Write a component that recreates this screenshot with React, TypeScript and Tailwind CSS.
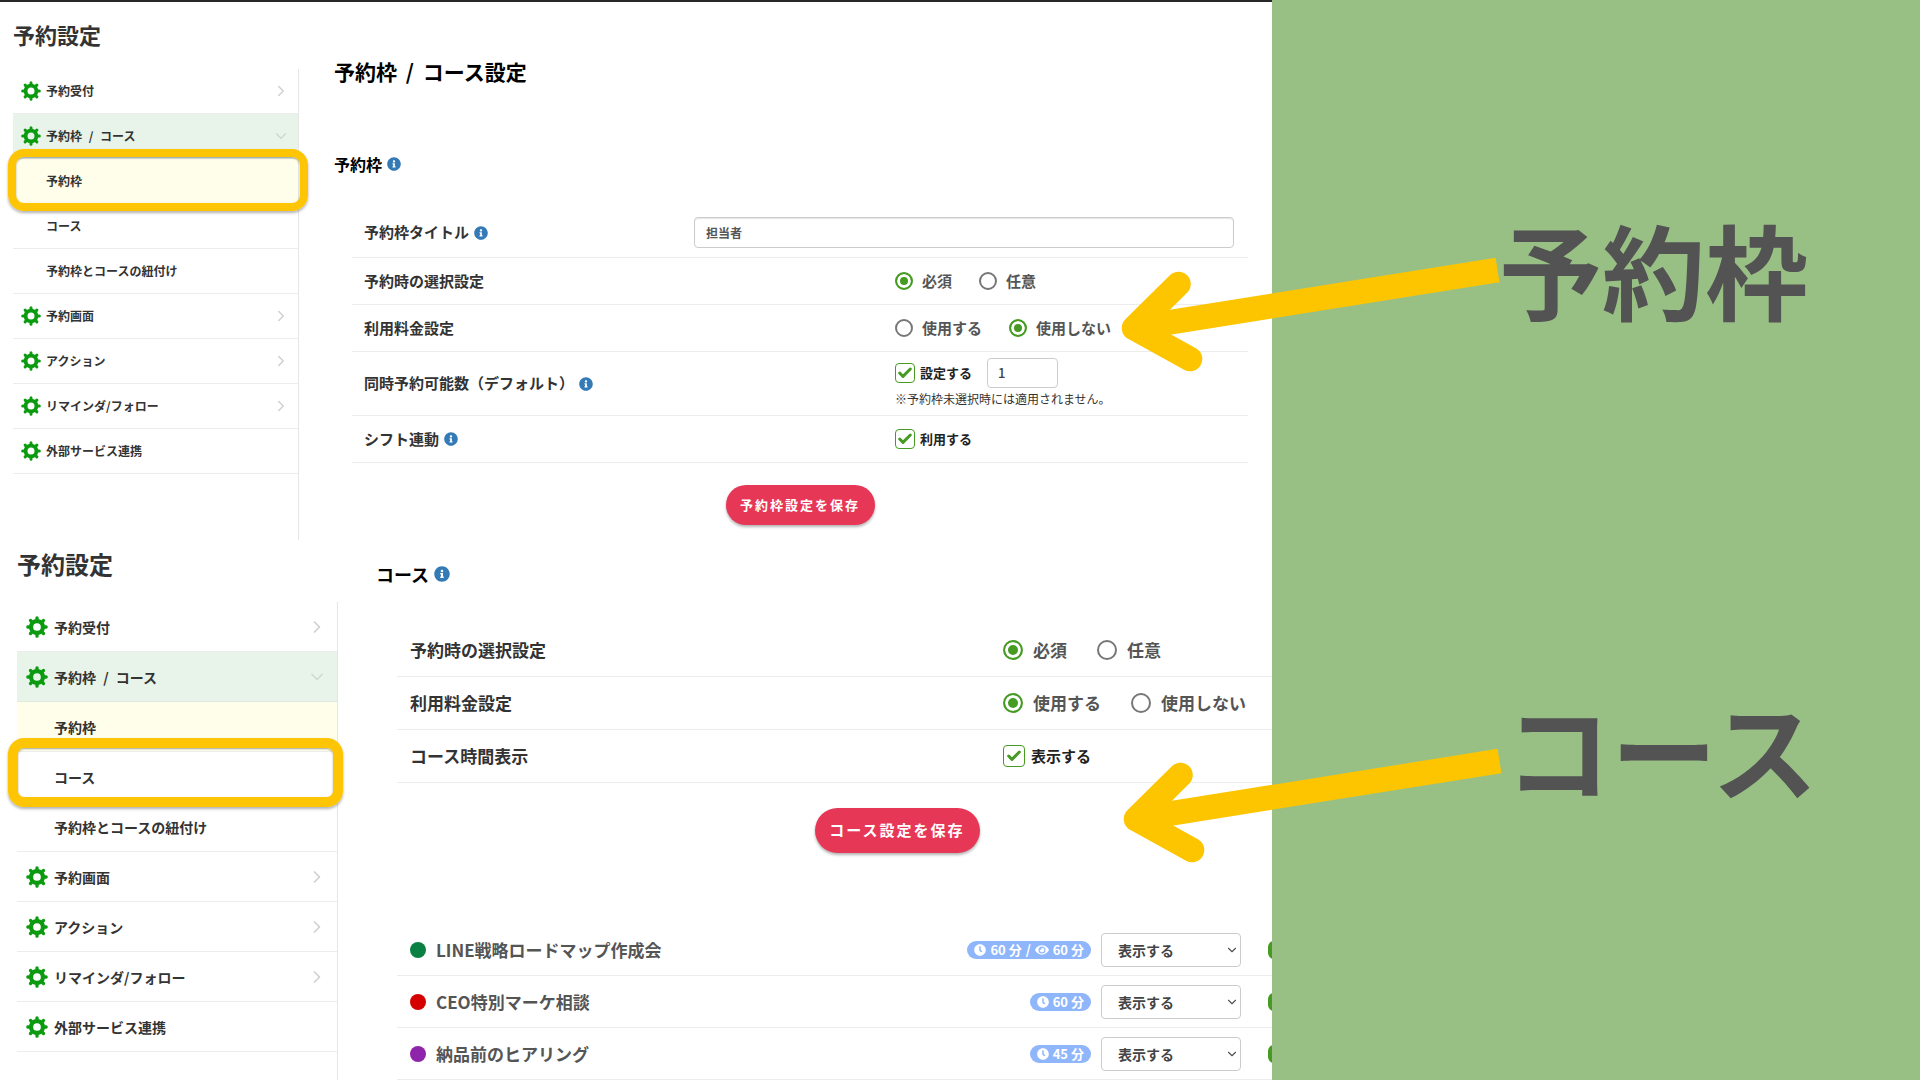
import React from 'react';
import { Check, ChevronDown, ChevronRight } from 'lucide-react';
import { FaClock, FaEye, FaInfoCircle } from 'react-icons/fa';

type Size = 'md' | 'lg';

interface MenuItem {
  id: string;
  label: React.ReactNode;
  kind: 'link' | 'parent' | 'open' | 'child';
}

const Slash: React.FC = () => <span className="mx-1">/</span>;

const MENU: MenuItem[] = [
  { id: 'reception', label: '予約受付', kind: 'parent' },
  { id: 'slot-course', label: <>予約枠 <Slash /> コース</>, kind: 'open' },
  { id: 'slot', label: '予約枠', kind: 'child' },
  { id: 'course', label: 'コース', kind: 'child' },
  { id: 'relation', label: '予約枠とコースの紐付け', kind: 'child' },
  { id: 'screen', label: '予約画面', kind: 'parent' },
  { id: 'action', label: 'アクション', kind: 'parent' },
  { id: 'remind', label: 'リマインダ/フォロー', kind: 'parent' },
  { id: 'external', label: '外部サービス連携', kind: 'link' },
];

const COURSES = [
  { name: 'LINE戦略ロードマップ作成会', dot: 'bg-[#0a8043]', time: '60 分', view: '60 分' },
  { name: 'CEO特別マーケ相談', dot: 'bg-[#d50000]', time: '60 分', view: null },
  { name: '納品前のヒアリング', dot: 'bg-[#8e24aa]', time: '45 分', view: null },
];

const GearIcon: React.FC<{ className: string }> = ({ className }) => (
  <svg viewBox="0 0 24 24" className={className} stroke="#0c9b10" fill="none" aria-hidden="true">
    <circle cx="12" cy="12" r="6.5" strokeWidth="4.6" />
    {[0, 45, 90, 135].map((deg) => (
      <g key={deg} transform={`rotate(${deg} 12 12)`} strokeWidth="3.6" strokeLinecap="round">
        <path d="M12 2V4M12 20v2" />
      </g>
    ))}
  </svg>
);

const Info: React.FC<{ size: Size }> = ({ size }) => (
  <FaInfoCircle className={`shrink-0 text-[#337ab7] ${size === 'lg' ? 'size-4' : 'size-3.5'}`} />
);

/* サイドメニュー */
const SideMenu: React.FC<{ size: Size; marked: string }> = ({ size, marked }) => {
  const lg = size === 'lg';
  return (
    <aside
      className={`flex shrink-0 flex-col text-[#333] ${
        lg ? 'w-[338px] pl-[17px] pt-1.5' : 'w-[299px] pl-[13px] pt-[17px]'
      }`}
    >
      <h2 className={`font-bold ${lg ? 'mb-5 text-2xl leading-9' : 'mb-5 text-[22px] leading-[30px]'}`}>
        予約設定
      </h2>
      <nav className="flex-1 border-r border-[#e6e6e6]">
        <ul>
          {MENU.map((item) => {
            const child = item.kind === 'child';
            return (
              <li
                key={item.id}
                className={`relative border-b ${lg ? 'h-[50px]' : 'h-[45px]'} ${
                  item.kind === 'open'
                    ? 'border-[#e0e8e0] bg-[#e8f4ea]'
                    : item.id === 'slot'
                      ? 'border-[#ececec] bg-[#fffeea]'
                      : 'border-[#ececec]'
                }`}
              >
                {item.id === marked && (
                  <span
                    className={`pointer-events-none absolute z-10 border-[#fdc503] shadow-[0_2px_3px_rgba(0,0,0,0.3),inset_0_1px_2px_rgba(0,0,0,0.35)] ${
                      lg
                        ? '-bottom-1.5 -left-[9px] -right-1.5 -top-3.5 rounded-2xl border-10'
                        : '-bottom-2 -left-[5px] -right-2.5 -top-2.5 rounded-2xl border-8'
                    }`}
                  />
                )}
                <a
                  href="#"
                  className={`flex h-full items-center font-bold ${
                    lg ? 'pl-[9px] pr-3.5 text-sm' : 'pl-2 pr-3 text-xs'
                  }`}
                >
                  {child ? (
                    <span className={lg ? 'w-7' : 'w-[25px]'} />
                  ) : (
                    <GearIcon className={lg ? 'mr-1.5 size-[22px]' : 'mr-[5px] size-5'} />
                  )}
                  <span className="flex-1">{item.label}</span>
                  {item.kind === 'parent' && (
                    <ChevronRight className={`-mr-1 text-[#d0d0d0] ${lg ? 'size-5' : 'size-[18px]'}`} strokeWidth={2} />
                  )}
                  {item.kind === 'open' && (
                    <ChevronDown className={`-mr-1 text-[#d0d8d2] ${lg ? 'size-5' : 'size-[18px]'}`} strokeWidth={2} />
                  )}
                </a>
              </li>
            );
          })}
        </ul>
      </nav>
    </aside>
  );
};

const Row: React.FC<{
  size: Size;
  label: React.ReactNode;
  height: string;
  children: React.ReactNode;
}> = ({ size, label, height, children }) => (
  <div className={`grid grid-cols-[60.6%_1fr] items-center border-b border-[#ececec] ${height}`}>
    <div
      className={`flex items-center gap-[5px] font-bold text-[#333] ${
        size === 'lg' ? 'pl-[13px] text-[17px]' : 'pl-3 text-[15px]'
      }`}
    >
      {label}
    </div>
    {children}
  </div>
);

const RadioGroup: React.FC<{ size: Size; name: string; options: string[]; value: string }> = ({
  size,
  name,
  options,
  value,
}) => {
  const lg = size === 'lg';
  return (
    <div role="radiogroup" className={`flex ${lg ? 'gap-[30px]' : 'gap-[27px]'}`}>
      {options.map((option) => (
        <label
          key={option}
          className={`flex items-center font-bold text-[#555] ${lg ? 'gap-2.5 text-[17px]' : 'gap-[9px] text-[15px]'}`}
        >
          <input
            type="radio"
            name={name}
            defaultChecked={option === value}
            className={`appearance-none rounded-full border-2 border-[#777] checked:border-[#469b22] checked:bg-[#469b22] checked:shadow-[inset_0_0_0_3px_#fff] ${
              lg ? 'size-5' : 'size-[18px]'
            }`}
          />
          {option}
        </label>
      ))}
    </div>
  );
};

const CheckField: React.FC<{ size: Size; label: string }> = ({ size, label }) => {
  const lg = size === 'lg';
  return (
    <label
      className={`flex items-center font-bold text-[#222] ${lg ? 'gap-1.5 text-[15px]' : 'gap-[5px] text-[13px]'}`}
    >
      <span className="relative flex">
        <input
          type="checkbox"
          defaultChecked
          className={`peer appearance-none rounded border border-[#469b22] ${lg ? 'size-[22px]' : 'size-5'}`}
        />
        <Check
          className="pointer-events-none absolute inset-0 m-auto hidden size-4 text-[#469b22] peer-checked:block"
          strokeWidth={4.5}
        />
      </span>
      {label}
    </label>
  );
};

const SaveButton: React.FC<{ size: Size; children: React.ReactNode }> = ({ size, children }) => (
  <button
    type="button"
    className={`mx-auto block rounded-full bg-[#e73757] font-bold tracking-[2px] text-white shadow-[0_2px_3px_rgba(0,0,0,0.3)] ${
      size === 'lg' ? 'mt-[25px] h-[45px] w-[165px] text-[15px]' : 'mt-[22px] h-10 w-[149px] text-[13px]'
    }`}
  >
    {children}
  </button>
);

const Arrow: React.FC<{ className: string }> = ({ className }) => (
  <svg
    viewBox="0 0 384 120"
    className={`pointer-events-none absolute h-[120px] w-96 ${className}`}
    fill="none"
    stroke="#fdc500"
    strokeWidth="24.6"
    aria-hidden="true"
  >
    <path d="M377.5 16 14 74" />
    <path d="M58.5 30 14 74l56 31" strokeLinecap="round" strokeLinejoin="round" />
  </svg>
);

export default function App() {
  return (
    <div
      lang="ja"
      className="flex min-h-screen overflow-hidden bg-white font-['Noto_Sans_CJK_JP','Noto_Sans',sans-serif]"
    >
      <main className="flex w-[66.25%] shrink-0 flex-col overflow-hidden">
        <div className="h-0.5 bg-[#2a2728]" />

        {/* 予約枠 */}
        <section className="flex min-h-[538px]">
          <SideMenu size="md" marked="slot" />
          <div className="flex-1 pl-[35px] pr-6 pt-[54px]">
            <h1 className="text-[21px] font-bold leading-[30px] text-black">
              予約枠 <Slash /> コース設定
            </h1>
            <h2 className="mb-8 mt-[66px] flex items-center gap-[5px] text-base font-bold leading-6 text-black">
              予約枠
              <Info size="md" />
            </h2>
            <form className="ml-[18px]">
              <div className="flex h-[50px] items-center justify-between border-b border-[#ececec] pl-3 pr-3.5">
                <label
                  htmlFor="slot-title"
                  className="flex items-center gap-[5px] text-[15px] font-bold text-[#333]"
                >
                  予約枠タイトル
                  <Info size="md" />
                </label>
                <input
                  id="slot-title"
                  type="text"
                  defaultValue="担当者"
                  className="h-[31px] w-[540px] rounded border border-[#ccc] px-[11px] text-xs font-bold text-[#555] shadow-[inset_0_1px_1px_rgba(0,0,0,0.1)]"
                />
              </div>
              <Row size="md" height="h-[47px]" label="予約時の選択設定">
                <RadioGroup size="md" name="slot-select" options={['必須', '任意']} value="必須" />
              </Row>
              <Row size="md" height="h-[47px]" label="利用料金設定">
                <RadioGroup size="md" name="slot-fee" options={['使用する', '使用しない']} value="使用しない" />
              </Row>
              <Row
                size="md"
                height="h-16"
                label={
                  <>
                    同時予約可能数（デフォルト）
                    <Info size="md" />
                  </>
                }
              >
                <div>
                  <div className="flex items-center gap-[15px]">
                    <CheckField size="md" label="設定する" />
                    <input
                      type="text"
                      aria-label="同時予約可能数"
                      defaultValue="1"
                      className="h-[30px] w-[71px] rounded-sm border border-[#ccc] px-2.5 text-[13px] font-medium text-[#444]"
                    />
                  </div>
                  <p className="text-xs leading-[22px] text-[#333]">※予約枠未選択時には適用されません。</p>
                </div>
              </Row>
              <Row
                size="md"
                height="h-[47px]"
                label={
                  <>
                    シフト連動
                    <Info size="md" />
                  </>
                }
              >
                <CheckField size="md" label="利用する" />
              </Row>
              <SaveButton size="md">予約枠設定を保存</SaveButton>
            </form>
          </div>
        </section>

        {/* コース */}
        <section className="flex flex-1">
          <SideMenu size="lg" marked="course" />
          <div className="min-w-0 flex-1 pl-[38px] pt-5">
            <h2 className="mb-9 flex items-center gap-[5px] text-lg font-bold leading-7 text-black">
              コース
              <Info size="lg" />
            </h2>
            <form className="ml-[21px] w-[1000px]">
              <Row size="lg" height="h-[53px]" label="予約時の選択設定">
                <RadioGroup size="lg" name="course-select" options={['必須', '任意']} value="必須" />
              </Row>
              <Row size="lg" height="h-[53px]" label="利用料金設定">
                <RadioGroup size="lg" name="course-fee" options={['使用する', '使用しない']} value="使用する" />
              </Row>
              <Row size="lg" height="h-[53px]" label="コース時間表示">
                <CheckField size="lg" label="表示する" />
              </Row>
              <SaveButton size="lg">コース設定を保存</SaveButton>

              <ul className="mt-[71px]">
                {COURSES.map((course) => (
                  <li
                    key={course.name}
                    className="flex h-[52px] items-center border-b border-[#ececec] pl-[13px] pr-[107px]"
                  >
                    <span className={`mr-2.5 size-4 rounded-full ${course.dot}`} />
                    <span className="flex-1 text-[17px] font-bold text-[#555]">{course.name}</span>
                    <span className="flex h-[18px] items-center gap-1 rounded-full bg-[#8fb6fb] px-[7px] text-[13px] font-bold text-white">
                      <FaClock className="size-3" />
                      {course.time}
                      {course.view && (
                        <>
                          <span>/</span>
                          <FaEye className="size-3.5" />
                          {course.view}
                        </>
                      )}
                    </span>
                    <span className="relative ml-2.5 flex">
                      <select
                        aria-label={course.name}
                        className="h-[34px] w-[140px] appearance-none rounded border border-[#ccc] bg-white pl-4 text-sm font-bold text-[#444]"
                      >
                        <option>表示する</option>
                        <option>表示しない</option>
                      </select>
                      <ChevronDown
                        className="pointer-events-none absolute right-0.5 top-2.5 size-3.5 text-[#555]"
                        strokeWidth={2}
                      />
                    </span>
                    <button
                      type="button"
                      aria-label="編集"
                      className="ml-[27px] h-[18px] w-[22px] rounded-md bg-[#469b22]"
                    />
                  </li>
                ))}
              </ul>
            </form>
          </div>
        </section>
      </main>

      <aside className="flex-1 bg-[#98c085] font-bold leading-none text-[#535353]">
        <div className="relative mt-[217px] pl-[227px]">
          <Arrow className="-left-[152px] top-[37px]" />
          <p className="whitespace-nowrap text-[103px]">予約枠</p>
        </div>
        <div className="relative mt-[374px] pl-[233px]">
          <Arrow className="-left-[150px] top-[51px]" />
          <p className="whitespace-nowrap text-[106px]">コース</p>
        </div>
      </aside>
    </div>
  );
}
